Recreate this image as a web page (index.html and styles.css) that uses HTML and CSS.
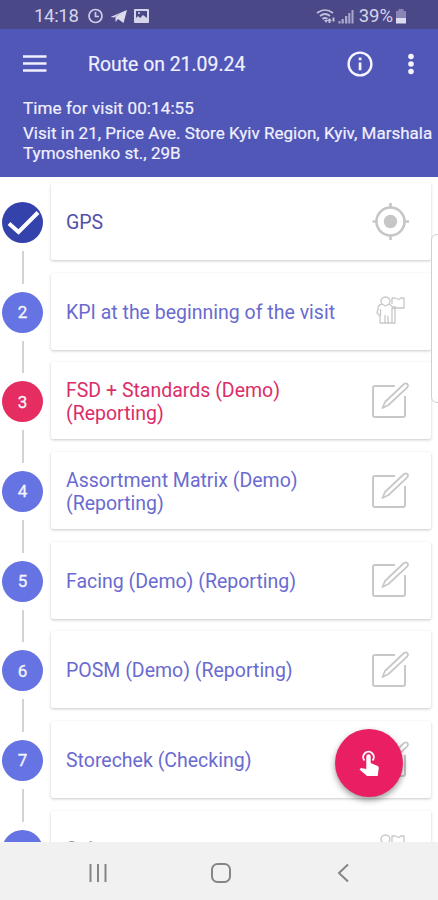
FILE: index.html
```html
<!DOCTYPE html>
<html lang="en">
<head>
<meta charset="utf-8">
<title>Route on 21.09.24</title>
<link rel="stylesheet" href="styles.css">
</head>
<body>
<svg class="defs" aria-hidden="true">
  <symbol id="edit" viewBox="0 0 38 38"><g fill="none" stroke="#c8c8c8" stroke-width="2" stroke-linejoin="round"><path d="M24 5H4a2 2 0 0 0-2 2v27a2 2 0 0 0 2 2h28a2 2 0 0 0 2-2V15"/><path d="M11.500 27l2.500-6L33 3q2-1.200 3.300 0t0 3.300L17.500 24z" stroke-width="1.800"/></g></symbol>
  <symbol id="people" viewBox="0 0 30 28"><g fill="none" stroke="#c8c8c8" stroke-width="1.300" stroke-linejoin="round"><path d="M6 8q-2-3 0-5.500 3.500-3 7 0 2 2.500 0 5.500l-3.500 2zM6 8q-4 1-4 5l-1 4 3 3v7h5v-8M4.500 13v7M9 27h3v-7M12 27h4V12l3 1M13 8l4 3h3M16 27h3V12h9V2h-3l-2 1.500L19 2h-3v6"/></g></symbol>
</svg>
<div class="screen">
  <header class="header">
    <div class="status">
      <span class="clock">14:18</span>
      <svg width="52" height="16" viewBox="0 0 52 16"><g fill="none" stroke="#cfcde6" stroke-width="1.700"><circle cx="8.500" cy="8" r="6.500"/><path d="M8.500 4v4.500h3.500"/></g><path d="M23.500 9L40 2l-3.500 13-5.500-4-2.500 3v-4.500l6-5-7.500 5z" fill="#dddbee"/><path d="M28 9l8-5-5 7z" fill="#dddbee"/></svg>
      <svg class="photo" width="16" height="14" viewBox="0 0 16 14"><rect width="15" height="14" rx="1" fill="#d6d4ea"/><path d="M2 2h11v7l-4-3-3 3-2-2-2 2z" fill="#4b4887"/><circle cx="5" cy="4" r="1" fill="#d6d4ea"/></svg>
      <span class="gap"></span>
      <svg width="40" height="17" viewBox="0 0 40 17"><g fill="none" stroke="#c2bfdc" stroke-width="1.700"><path d="M1 5q8-6 16 0M4 8q5-4 10 0M6.500 11q2.500-2 5 0"/></g><path d="M8 12h4l-2 3zM11 13l2.500-3 2.500 3h-1.500v2h-2v-2zM16.500 9.500h2v4h-2z" fill="#c2bfdc"/><path d="M22.500 13h2v2.500h-2zM25.500 11h2.300v4.500h-2.300zM29 8h2.300v7.500H29zM32.300 5h2v10.500h-2zM35.500 2h2v13.500h-2z" fill="#aaa7cb"/></svg>
      <span class="percent">39%</span>
      <svg class="battery" width="11" height="15" viewBox="0 0 11 15"><path d="M0 2h2.500V0h5v2H10v7H0z" fill="#8985b5"/><path d="M0 9h10v5.500H0z" fill="#dddbee"/></svg>
    </div>
    <div class="bar">
      <svg class="menu" width="24" height="18" viewBox="0 0 24 18"><path d="M0 1.500h23.500M0 8.500h23.500M0 15.500h23.500" stroke="#f0f0ff" stroke-width="2.500"/></svg>
      <h1>Route on 21.09.24</h1>
      <svg class="info" width="26" height="26" viewBox="0 0 26 26"><circle cx="13" cy="13" r="11.400" fill="none" stroke="#f4f4ff" stroke-width="2.400"/><path d="M11.700 6.500h2.700v2.700h-2.700zM11.700 11.500h2.700v7.700h-2.700z" fill="#f4f4ff"/></svg>
      <svg class="more" width="8" height="22" viewBox="0 0 8 22"><g fill="#f4f4ff"><circle cx="4" cy="3.500" r="2.800"/><circle cx="4" cy="11" r="2.800"/><circle cx="4" cy="18.500" r="2.800"/></g></svg>
    </div>
    <div class="time">Time for visit 00:14:55</div>
    <div class="place">Visit in 21, Price Ave. Store Kyiv Region, Kyiv, Marshala<br>Tymoshenko st., 29B</div>
  </header>
  <main class="list">
    <div class="row done"><div class="rail"><span class="dot"><svg width="34" height="28" viewBox="0 0 34 28"><path d="M3 15.500l9.500 8.500L32 4.500" fill="none" stroke="#fff" stroke-width="4"/></svg></span></div><div class="card"><span class="label">GPS</span><svg class="icon" width="38" height="38" viewBox="0 0 38 38"><g fill="none" stroke="#c6c6c6" stroke-width="2.600"><circle cx="19.500" cy="19.500" r="14"/><path d="M19.500 1v5M19.500 33v5M1.500 19.500h4M33 19.500h5"/></g><circle cx="19.500" cy="19.500" r="6.700" fill="#c6c6c6"/></svg></div></div>
    <div class="row"><div class="rail"><span class="dot">2</span></div><div class="card"><span class="label">KPI at the beginning of the visit</span><svg class="icon people" width="30" height="28"><use href="#people"/></svg></div></div>
    <div class="row current"><div class="rail"><span class="dot">3</span></div><div class="card"><span class="label">FSD + Standards (Demo)<br>(Reporting)</span><svg class="icon" width="38" height="38"><use href="#edit"/></svg></div></div>
    <div class="row"><div class="rail"><span class="dot">4</span></div><div class="card"><span class="label">Assortment Matrix (Demo)<br>(Reporting)</span><svg class="icon" width="38" height="38"><use href="#edit"/></svg></div></div>
    <div class="row"><div class="rail"><span class="dot">5</span></div><div class="card"><span class="label">Facing (Demo) (Reporting)</span><svg class="icon" width="38" height="38"><use href="#edit"/></svg></div></div>
    <div class="row"><div class="rail"><span class="dot">6</span></div><div class="card"><span class="label">POSM (Demo) (Reporting)</span><svg class="icon" width="38" height="38"><use href="#edit"/></svg></div></div>
    <div class="row"><div class="rail"><span class="dot">7</span></div><div class="card"><span class="label">Storechek (Checking)</span><svg class="icon" width="38" height="38"><use href="#edit"/></svg></div></div>
    <div class="row next"><div class="rail"><span class="dot"></span></div><div class="card"><span class="label">Sales</span><svg class="icon people" width="30" height="28"><use href="#people"/></svg></div></div>
    <div class="edge"></div>
    <div class="fab"><svg width="24" height="30" viewBox="0 0 24 30"><path d="M5.500 11.500a5.300 5.300 0 1 1 8 0" fill="none" stroke="#fff" stroke-width="1.900"/><path d="M7.300 7.500a2.200 2.200 0 0 1 4.400 0V14l7 3q1.500.700 1 2.500l-1 7.500H8L.5 20.500l1.500-1.500 5.300 1z" fill="#fff"/></svg></div>
  </main>
  <nav class="nav">
    <svg width="20" height="20" viewBox="0 0 20 20"><path d="M2.500 1v18M10 1v18M17.500 1v18" stroke="#858585" stroke-width="2"/></svg>
    <svg class="home" width="22" height="22" viewBox="0 0 22 22"><rect x="2" y="2" width="18" height="18" rx="5.500" fill="none" stroke="#858585" stroke-width="2"/></svg>
    <svg width="14" height="20" viewBox="0 0 14 20"><path d="M12 1.500L3 10l9 8.500" fill="none" stroke="#858585" stroke-width="2"/></svg>
  </nav>
</div>
</body>
</html>
```
FILE: styles.css
```css
* { box-sizing: border-box; }
body { margin: 0; font-family: Roboto, sans-serif; }
svg { display: block; flex: none; }
.defs { position: absolute; width: 0; height: 0; }
.screen { width: 438px; height: 900px; display: flex; flex-direction: column; overflow: hidden; background: #fff; }
.header { height: 177px; flex: none; background: #5157b7; color: #f0f0ff; white-space: nowrap; }
.status { height: 29px; display: flex; align-items: center; padding: 3px 31px 0 34px; background: #4b4887; color: #d6d4ea; font-size: 18.5px; }
.clock { width: 53px; letter-spacing: -.3px; }
.photo { margin-left: -5px; }
.gap { flex: 1; }
.percent { margin: 0 3px 0 3px; }
.bar { height: 70px; display: flex; align-items: center; padding: 0 23px; }
.bar h1 { margin: 0; padding-left: 41px; flex: 1; font-size: 19.4px; font-weight: 400; -webkit-text-stroke: .2px; }
.info { margin-right: 34px; }
.time, .place { padding-left: 23px; font-size: 17px; line-height: 20px; letter-spacing: .02px; -webkit-text-stroke: .2px; }
.time { margin-top: -1px; height: 25px; letter-spacing: .1px; }
.list { position: relative; height: 665px; overflow: hidden; flex: none; }
.row { height: 89.7px; display: flex; }
.rail { width: 45px; flex: none; display: flex; flex-direction: column; align-items: center; padding-top: 1px; }
.rail::before, .rail::after { content: ""; width: 2px; background: #d3d3d3; flex: 1; }
.rail::before { margin: -1px 0 8px; }
.rail::after { margin: 8px 0 -1px; }
.done .rail::before { visibility: hidden; }
.dot { width: 41px; height: 41px; flex: none; border-radius: 50%; background: #6673e2; color: #f5f5ff; display: flex; align-items: center; justify-content: center; font-size: 17px; -webkit-text-stroke: .3px; }
.done .dot { background: #3442ac; }
.current .dot { background: #e62d62; }
.card { width: 380px; height: 77px; margin: 6px 0 0 6px; border-radius: 2px; background: #fff; box-shadow: 0 1px 3px rgba(0,0,0,.22); display: flex; align-items: center; padding: 0 22px 0 15px; color: #6a6bd0; }
.label { flex: 1; padding-top: 2px; font-size: 19.5px; line-height: 23px; white-space: nowrap; }
.icon { margin-top: -2px; }
.done .label { color: #5350ad; }
.current .label { color: #dc2d68; }
.next .label { color: #999; padding-top: 0; }
.people { margin: -3px 3px 0 0; }
.edge { position: absolute; right: -9px; top: 57px; width: 16px; height: 169px; border: 1px solid #d0d0d0; border-radius: 6px; background: #fff; }
.fab { position: absolute; left: 335px; top: 552px; width: 68px; height: 68px; border-radius: 50%; background: #e91e63; box-shadow: 0 3px 6px rgba(0,0,0,.4); display: flex; align-items: center; justify-content: center; padding: 2px 0 0 3px; }
.nav { height: 58px; flex: none; background: #f1f1f1; display: flex; align-items: center; padding: 4px 88px 0; justify-content: space-between; }
.home { margin-right: 3px; }
```
